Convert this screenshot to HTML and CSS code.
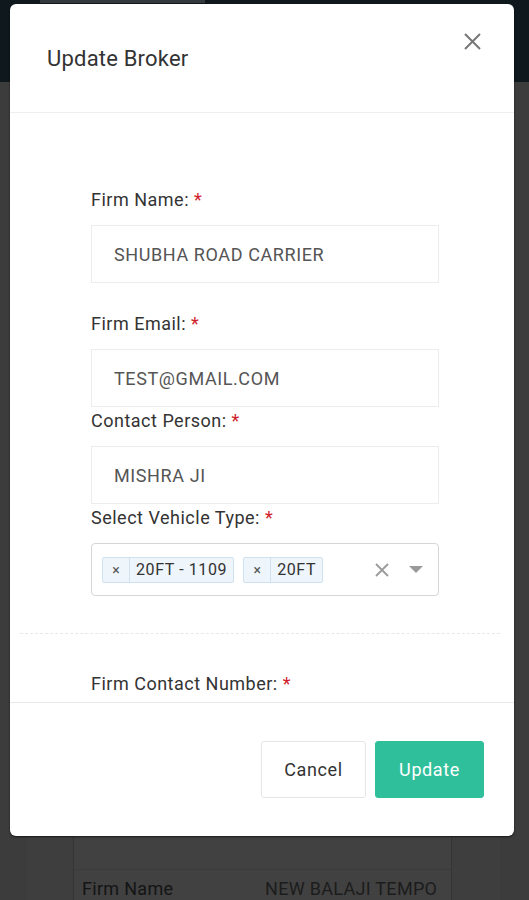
FILE: index.html
```html
<!DOCTYPE html>
<html>
<head>
<meta charset="utf-8">
<link rel="stylesheet" href="styles.css">
</head>
<body>
<div class="page">
  <header class="nav"><span class="nav-tab"></span></header>
  <main class="content">
    <section class="card">
      <div class="card-spacer"></div>
      <div class="card-row">
        <span class="card-key">Firm Name</span>
        <span class="card-val">NEW BALAJI TEMPO</span>
      </div>
    </section>
  </main>
</div>

<div class="modal">
  <div class="modal-header">
    <h2 class="modal-title">Update Broker</h2>
    <button class="close-btn" aria-label="Close">
      <svg width="17" height="17" viewBox="0 0 17 17"><path d="M1 1L16 16M16 1L1 16" stroke="#777" stroke-width="2" fill="none"/></svg>
    </button>
  </div>
  <div class="modal-body">
    <form class="form">
      <div class="field field-first">
        <label class="label">Firm Name: <span class="req">*</span></label>
        <div class="input">SHUBHA ROAD CARRIER</div>
      </div>
      <div class="field field-tight">
        <label class="label">Firm Email: <span class="req">*</span></label>
        <div class="input">TEST@GMAIL.COM</div>
      </div>
      <div class="field field-tight">
        <label class="label">Contact Person: <span class="req">*</span></label>
        <div class="input">MISHRA JI</div>
      </div>
      <div class="field">
        <label class="label">Select Vehicle Type: <span class="req">*</span></label>
        <div class="select">
          <div class="chips">
            <span class="chip"><span class="chip-x">×</span><span class="chip-label">20FT - 1109</span></span>
            <span class="chip"><span class="chip-x">×</span><span class="chip-label">20FT</span></span>
          </div>
          <span class="select-clear">
            <svg width="14" height="14" viewBox="0 0 14 14"><path d="M1 1L13 13M13 1L1 13" stroke="#9a9a9a" stroke-width="1.8" fill="none"/></svg>
          </span>
          <span class="select-arrow"></span>
        </div>
      </div>
      <div class="divider"></div>
      <div class="field">
        <label class="label">Firm Contact Number: <span class="req">*</span></label>
      </div>
    </form>
  </div>
  <div class="modal-footer">
    <button class="btn btn-cancel">Cancel</button>
    <button class="btn btn-primary">Update</button>
  </div>
</div>
</body>
</html>
```

FILE: styles.css
```css
* { box-sizing: border-box; }
html, body {
  margin: 0;
  padding: 0;
}
body {
  width: 529px;
  height: 900px;
  overflow: hidden;
  position: relative;
  font-family: Roboto, "Liberation Sans", Arial, sans-serif;
  background: #3c3c3c;
}
.page {
  height: 900px;
  display: flex;
  flex-direction: column;
  overflow: hidden;
}
.nav {
  height: 82px;
  background: #0f181c;
  flex: none;
  padding-left: 40px;
}
.nav-tab {
  display: block;
  width: 165px;
  height: 3px;
  background: #33393c;
}
.content {
  flex: 1;
  min-height: 0;
  overflow: hidden;
  background: #3e3e3e;
  margin-left: 27px;
  width: 473px;
  padding-top: 18px;
}
.card {
  margin-left: 46px;
  width: 379px;
  height: 100%;
  background: #414141;
  border-left: 1px solid #353535;
  border-right: 1px solid #353535;
}
.card-spacer {
  height: 770px;
  border-bottom: 1px solid #3b3b3b;
}
.card-row {
  display: flex;
  padding: 8px 0 0 8px;
  font-size: 18px;
  letter-spacing: 0.3px;
  color: #141414;
}
.card-key { width: 183px; }
.card-val { color: #1c1c1c; }

.modal {
  position: absolute;
  top: 4px;
  left: 10px;
  width: 504px;
  height: 832px;
  background: #fff;
  border-radius: 6px;
  box-shadow: 0 1px 2px rgba(0,0,0,0.6);
  display: flex;
  flex-direction: column;
  overflow: hidden;
}
.modal-header {
  height: 109px;
  flex: none;
  display: flex;
  justify-content: space-between;
  align-items: center;
  padding: 0 33px 0 37px;
  border-bottom: 1px solid #efefef;
}
.modal-title {
  margin: 0;
  font-size: 22px;
  font-weight: 400;
  letter-spacing: 0.2px;
  color: #333;
}
.close-btn {
  align-self: flex-start;
  margin-top: 29px;
  padding: 0;
  border: 0;
  background: none;
  width: 17px;
  height: 17px;
  display: flex;
}
.modal-body {
  height: 589px;
  flex: none;
  overflow: hidden;
}
.form {
  padding: 75px 75px 0 81px;
  margin: 0;
}
.field-first { margin-bottom: 29px; }
.field-tight { margin-bottom: 2px; }
.label {
  display: block;
  font-size: 18px;
  letter-spacing: 0.5px;
  line-height: 24px;
  color: #333;
  margin-bottom: 13px;
}
.req { color: #d0202a; }
.input {
  height: 58px;
  border: 1px solid #ececec;
  padding-left: 22px;
  display: flex;
  align-items: center;
  font-size: 18px;
  letter-spacing: 0.6px;
  color: #555;
  background: #fff;
}
.select {
  height: 53px;
  border: 1px solid #d6d6d6;
  border-radius: 4px;
  display: flex;
  align-items: center;
  padding: 0 15px 0 10px;
}
.chips {
  flex: 1;
  display: flex;
  gap: 9px;
}
.chip {
  display: flex;
  height: 26px;
  border: 1px solid #cfe2f1;
  background: #eef5fb;
  border-radius: 2px;
  font-size: 16px;
  letter-spacing: 0.6px;
  color: #333;
}
.chip-x {
  width: 27px;
  border-right: 1px solid #cfe2f1;
  display: flex;
  align-items: center;
  justify-content: center;
  font-size: 14px;
  letter-spacing: 0;
  color: #555;
}
.chip-label {
  display: flex;
  align-items: center;
  padding: 0 6px;
}
.select-clear {
  display: flex;
  margin-right: 20px;
}
.select-arrow {
  width: 0;
  height: 0;
  border-left: 7px solid transparent;
  border-right: 7px solid transparent;
  border-top: 7px solid #9a9a9a;
}
.divider {
  margin: 37px -61px 38px -71px;
  border-top: 1px dashed #e8e8e8;
}
.modal-footer {
  flex: 1;
  border-top: 1px solid #e9e9e9;
  display: flex;
  justify-content: flex-end;
  align-items: center;
  gap: 9px;
  padding-right: 30px;
}
.btn {
  height: 57px;
  font-family: inherit;
  font-size: 18px;
  letter-spacing: 0.6px;
  border-radius: 3px;
  cursor: pointer;
}
.btn-cancel {
  width: 105px;
  background: #fff;
  border: 1px solid #e6e6e6;
  color: #333;
}
.btn-primary {
  width: 109px;
  background: #2fbf9b;
  border: 1px solid #2fbf9b;
  color: #fff;
}
```
